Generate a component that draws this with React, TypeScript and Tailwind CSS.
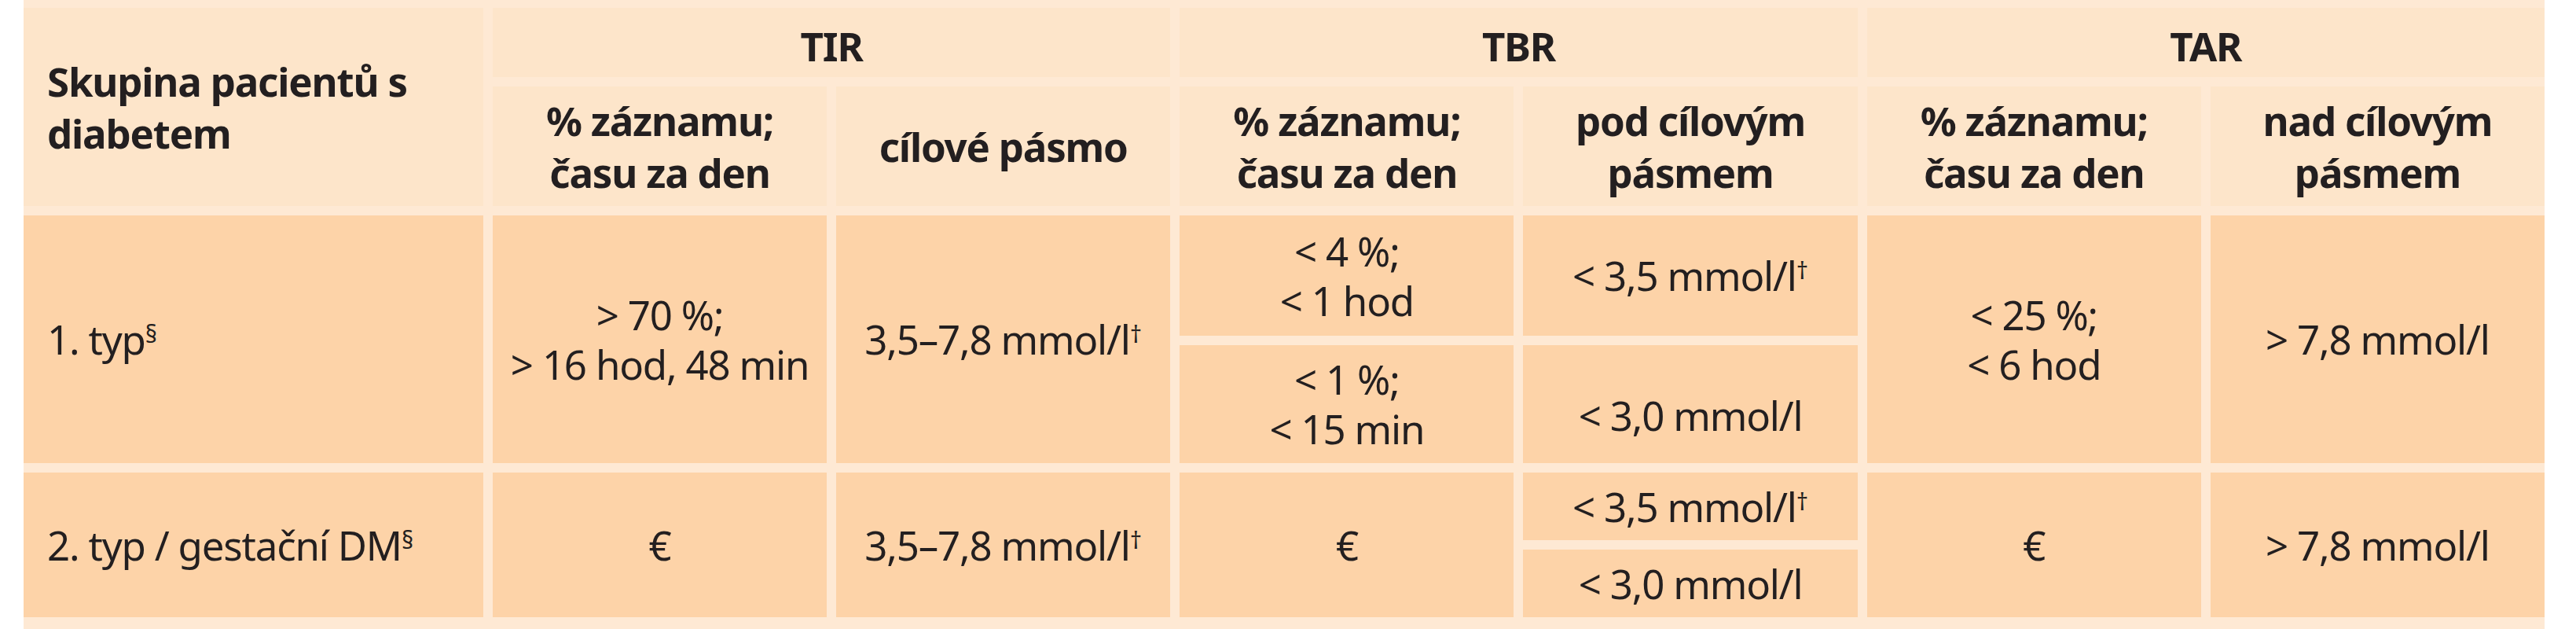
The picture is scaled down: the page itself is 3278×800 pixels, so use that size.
import type { ReactNode } from "react";

type CellProps = {
  lines: ReactNode[];
  className?: string;
  head?: boolean;
  left?: boolean;
};

function Cell({ lines, className = "", head = false, left = false }: CellProps) {
  return (
    <div
      className={[
        "flex items-center",
        left ? "justify-start pl-[30px] text-left" : "justify-center text-center",
        head
          ? "bg-[#fde5ca] font-bold leading-[66px]"
          : "bg-[#fdd3a8] font-normal leading-[63px]",
        className,
      ].join(" ")}
    >
      <div>
        {lines.map((line, i) => (
          <div key={i} className="whitespace-nowrap">
            {line}
          </div>
        ))}
      </div>
    </div>
  );
}

function Sup({ children }: { children: ReactNode }) {
  return <sup className="text-[30px] tracking-normal">{children}</sup>;
}

export default function App() {
  return (
    <div className="h-[800px] w-[3278px] bg-white">
      <div className="ml-[30px] h-[800px] w-[3208px] bg-[#fee9d4] pt-[10px] font-['Noto_Sans',sans-serif] text-[51px] tracking-[-1.2px] text-[#231f20]">
        <div className="grid grid-cols-[585px_repeat(6,minmax(0,1fr))] grid-rows-[88px_152px_153px_150px_86px_86px] gap-[12px]">
          {/* header */}
          <Cell head left className="row-span-2" lines={["Skupina pacientů s", "diabetem"]} />
          <Cell head className="col-span-2 pt-[8px]" lines={["TIR"]} />
          <Cell head className="col-span-2 pt-[8px]" lines={["TBR"]} />
          <Cell head className="col-span-2 pt-[8px]" lines={["TAR"]} />

          <Cell head lines={["% záznamu;", "času za den"]} />
          <Cell head lines={["cílové pásmo"]} />
          <Cell head lines={["% záznamu;", "času za den"]} />
          <Cell head lines={["pod cílovým", "pásmem"]} />
          <Cell head lines={["% záznamu;", "času za den"]} />
          <Cell head lines={["nad cílovým", "pásmem"]} />

          {/* 1. typ */}
          <Cell left className="row-span-2" lines={[<>1. typ<Sup>§</Sup></>]} />
          <Cell className="row-span-2" lines={["> 70 %;", "> 16 hod, 48 min"]} />
          <Cell className="row-span-2" lines={[<>3,5–7,8 mmol/l<Sup>†</Sup></>]} />
          <Cell lines={["< 4 %;", "< 1 hod"]} />
          <Cell lines={[<>&lt; 3,5 mmol/l<Sup>†</Sup></>]} />
          <Cell className="row-span-2" lines={["< 25 %;", "< 6 hod"]} />
          <Cell className="row-span-2" lines={["> 7,8 mmol/l"]} />
          <Cell lines={["< 1 %;", "< 15 min"]} />
          <Cell className="pt-[28px]" lines={["< 3,0 mmol/l"]} />

          {/* 2. typ */}
          <Cell left className="row-span-2" lines={[<>2. typ / gestační DM<Sup>§</Sup></>]} />
          <Cell className="row-span-2" lines={["€"]} />
          <Cell className="row-span-2" lines={[<>3,5–7,8 mmol/l<Sup>†</Sup></>]} />
          <Cell className="row-span-2" lines={["€"]} />
          <Cell lines={[<>&lt; 3,5 mmol/l<Sup>†</Sup></>]} />
          <Cell className="row-span-2" lines={["€"]} />
          <Cell className="row-span-2" lines={["> 7,8 mmol/l"]} />
          <Cell lines={["< 3,0 mmol/l"]} />
        </div>
      </div>
    </div>
  );
}
